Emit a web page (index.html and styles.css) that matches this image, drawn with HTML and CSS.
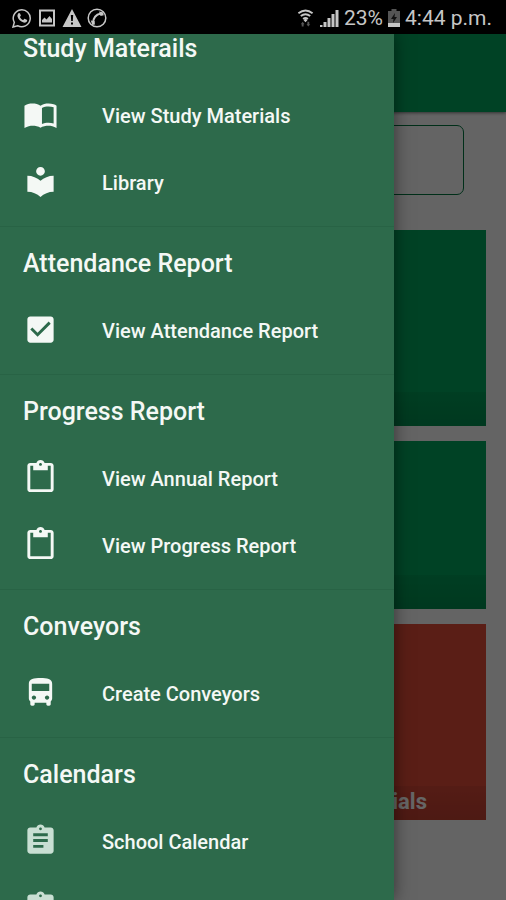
FILE: index.html
```html
<!DOCTYPE html>
<html lang="en">
<head>
<meta charset="utf-8">
<meta name="viewport" content="width=device-width, initial-scale=1">
<title>School menu</title>
<link rel="stylesheet" href="styles.css">
</head>
<body>
<svg class="sprite" aria-hidden="true">
  <symbol id="book" viewBox="0 0 24 24"><path d="M21 5c-1.11-.35-2.33-.5-3.5-.5-1.95 0-4.05.4-5.5 1.5-1.45-1.1-3.55-1.5-5.5-1.500S2.450 4.900 1 6v15.200C3 20.100 5.050 19.700 6.500 19.700c1.950 0 4.050.3 5.500 1.300 1.350-.9 3.800-1.300 5.500-1.300 1.650 0 3.500.4 5.500 1.500V6c-.6-.45-1.250-.75-2-1zm0 13.100c-1.100-.35-2.300-.5-3.500-.5-1.700 0-3.200.3-4.500.9V7.500c1.350-.7 2.800-1 4.500-1 1.200 0 2.400.15 3.500.5v11.100z"/></symbol>
  <symbol id="library" viewBox="0 0 24 24"><path d="M12 11.55C9.64 9.35 6.48 8 3 8v11c3.48 0 6.64 1.35 9 3.55 2.36-2.19 5.52-3.55 9-3.55V8c-3.48 0-6.64 1.35-9 3.55zM12 8c1.66 0 3-1.34 3-3s-1.34-3-3-3-3 1.34-3 3 1.34 3 3 3z"/></symbol>
  <symbol id="check" viewBox="0 0 24 24"><path fill-rule="evenodd" d="M19 3H5c-1.1 0-2 .9-2 2v14c0 1.1.9 2 2 2h14c1.1 0 2-.9 2-2V5c0-1.1-.9-2-2-2zm-9 14-5-5 1.41-1.41L10 14.17l7.59-7.59L19 8l-9 9z"/></symbol>
  <symbol id="paste" viewBox="0 0 24 24"><path d="M19 2h-4.18C14.4.84 13.3 0 12 0c-1.3 0-2.4.84-2.82 2H5c-1.1 0-2 .9-2 2v16c0 1.1.9 2 2 2h14c1.1 0 2-.9 2-2V4c0-1.1-.9-2-2-2zm-7 0c.55 0 1 .45 1 1s-.45 1-1 1-1-.45-1-1 .45-1 1-1zm7 18H5V4h2v3h10V4h2v16z"/></symbol>
  <symbol id="bus" viewBox="0 0 24 24"><path d="M4 16c0 .88.39 1.67 1 2.22V20c0 .55.45 1 1 1h1c.55 0 1-.45 1-1v-1h8v1c0 .55.45 1 1 1h1c.55 0 1-.45 1-1v-1.78c.61-.55 1-1.34 1-2.22V6c0-3.5-3.58-4-8-4s-8 .5-8 4v10zm3.5 1c-.83 0-1.5-.67-1.5-1.5S6.67 14 7.5 14s1.5.67 1.5 1.5S8.33 17 7.5 17zm9 0c-.83 0-1.5-.67-1.5-1.5s.67-1.5 1.5-1.5 1.5.67 1.5 1.5-.67 1.5-1.5 1.5zm1.5-6H6V6h12v5z"/></symbol>
  <symbol id="assignment" viewBox="0 0 24 24"><path d="M19 3h-4.18C14.4 1.84 13.3 1 12 1c-1.3 0-2.4.84-2.82 2H5c-1.1 0-2 .9-2 2v14c0 1.1.9 2 2 2h14c1.1 0 2-.9 2-2V5c0-1.1-.9-2-2-2zm-7 0c.55 0 1 .45 1 1s-.45 1-1 1-1-.45-1-1 .45-1 1-1zm2 14H7v-2h7v2zm3-4H7v-2h10v2zm0-4H7V7h10v2z"/></symbol>
</svg>

<header class="status">
  <div class="status-group notices">
    <svg viewBox="0 0 20 20" class="glyph"><path class="line" d="M1 19l1.300-4.600A8.500 8.500 0 1 1 5.600 17.700z"/><path d="M6.500 5.200c.5-.4 1.200-.3 1.500.3l.8 1.700c.1.300 0 .6-.2.900l-.7.800c.7 1.500 1.900 2.600 3.400 3.200l.9-1c.2-.3.500-.3.800-.2l1.800.9c.5.300.5.800.3 1.300-.6 1.300-2 1.800-3.500 1.400-3-.8-5.500-3.200-6.100-6-.2-1.300.2-2.600 1-3.300z"/></svg>
    <svg viewBox="0 0 20 20" class="glyph"><path class="line thick" d="M3 2.500h14v15H3z"/><path d="M5 14.500V12l2.500-2.500 2 2L12.500 8l2.500 3v3.500z"/></svg>
    <svg viewBox="0 0 20 20" class="glyph"><path fill-rule="evenodd" d="M10 1l9.500 18H.5zM8.800 7l.4 6h1.600l.4-6zm.2 7.500v2h2v-2z"/></svg>
    <svg viewBox="0 0 20 20" class="glyph"><circle class="line" cx="10" cy="10" r="8.800"/><path class="line thick" d="M6 15.500C6 10 9 6.500 14 5.500"/><path d="M3.800 12.500l3.800.5.300 3.500-2.600.5zM12 3.500l3.800.8 1 3-3.300.7z"/></svg>
  </div>
  <div class="status-group">
    <svg viewBox="0 0 18 20" class="wifi"><path class="line thick" d="M1.500 5q7.500-6 15 0M4 8q5-4 10 0M6.500 11q2.500-2 5 0"/><path d="M9 10l2 2.500-2 2-2-2z"/><path class="dim" d="M6 14l2 2.500H7V19H5v-2.500H4zM12 19l-2-2.500h1V14h2v2.500h1z"/></svg>
    <svg viewBox="0 0 20 20" class="glyph"><path d="M1 17h2.500v2H1zM4.500 14h3v5h-3zM8.500 10h3v9h-3zM12.500 6h3v13h-3zM16.500 2h3v17h-3z"/></svg>
    <span>23%</span>
    <svg viewBox="0 0 12 20" class="battery"><path class="dim" d="M3.500 1h5v2H12v16H0V3h3.500z"/><path class="bolt" d="M7 5L3 11h2.500L5 15l4-6H6.500z"/><path d="M0 15h12v4H0z"/></svg>
    <span>4:44 p.m.</span>
  </div>
</header>

<div class="screen">
  <main class="page">
    <div class="toolbar"></div>
    <div class="content">
      <input class="search" type="text" aria-label="Search">
      <div class="cards">
        <section class="card tall"><p class="caption"></p></section>
        <section class="card"><p class="caption"></p></section>
        <section class="card tall red"><p class="caption">Materials</p></section>
      </div>
    </div>
  </main>
  <div class="scrim"></div>
  <nav class="drawer">
    <div class="drawer-list">
      <section class="group">
        <h2>Study Materails</h2>
        <a class="item" href="#"><svg><use href="#book"/></svg>View Study Materials</a>
        <a class="item" href="#"><svg><use href="#library"/></svg>Library</a>
      </section>
      <section class="group">
        <h2>Attendance Report</h2>
        <a class="item" href="#"><svg><use href="#check"/></svg>View Attendance Report</a>
      </section>
      <section class="group">
        <h2>Progress Report</h2>
        <a class="item" href="#"><svg><use href="#paste"/></svg>View Annual Report</a>
        <a class="item" href="#"><svg><use href="#paste"/></svg>View Progress Report</a>
      </section>
      <section class="group">
        <h2>Conveyors</h2>
        <a class="item" href="#"><svg><use href="#bus"/></svg>Create Conveyors</a>
      </section>
      <section class="group">
        <h2>Calendars</h2>
        <a class="item soft" href="#"><svg><use href="#assignment"/></svg>School Calendar</a>
        <a class="item soft" href="#"><svg><use href="#assignment"/></svg>Activity Calendar</a>
      </section>
    </div>
  </nav>
</div>
</body>
</html>
```

FILE: styles.css
```css
* {
  box-sizing: border-box;
}

body {
  margin: 0;
  height: 100vh;
  display: flex;
  flex-direction: column;
  overflow: hidden;
  font-family: Roboto, "Liberation Sans", sans-serif;
}

.sprite {
  display: none;
}

.status {
  flex: none;
  height: 34px;
  padding: 2px 14px 0 12px;
  display: flex;
  align-items: center;
  justify-content: space-between;
  background: #000;
  color: #c6c6c6;
  font-size: 21px;
}

.status-group {
  display: flex;
  align-items: center;
  gap: 5px;
}

.status svg {
  height: 20px;
  fill: #c6c6c6;
}

.glyph {
  width: 20px;
}

.wifi {
  width: 17px;
}

.battery {
  width: 12px;
}

.status .line {
  fill: none;
  stroke: #c6c6c6;
  stroke-width: 1.5;
}

.status .thick {
  stroke-width: 2;
}

.status .dim {
  fill: #555;
}

.status .bolt {
  fill: #111;
}

.screen {
  position: relative;
  flex: 1;
  min-height: 0;
  overflow: hidden;
}

.page {
  height: 100%;
  background: #fafafa;
}

.toolbar {
  height: 78px;
  background: #00a55c;
  box-shadow: 0 1px 3px rgba(0, 0, 0, 0.5);
}

.content {
  padding: 13px 20px;
}

.search {
  display: block;
  width: calc(100% - 44px);
  height: 70px;
  margin: 0 22px 35px;
  border: 1px solid #00753f;
  border-radius: 7px;
  background: transparent;
}

.cards {
  display: grid;
  gap: 15px;
}

.card {
  height: 168px;
  display: flex;
  flex-direction: column;
  justify-content: flex-end;
  background: #00a55c;
}

.tall {
  height: 196px;
}

.red {
  background: #e14b39;
}

.caption {
  height: 34px;
  margin: 0;
  padding-right: 59px;
  background: linear-gradient(rgba(0, 0, 0, 0.06), rgba(0, 0, 0, 0.14));
  color: #fff;
  font-size: 22px;
  font-weight: 700;
  line-height: 32px;
  text-align: right;
}

.scrim {
  position: absolute;
  inset: 0;
  background: rgba(0, 0, 0, 0.6);
}

.drawer {
  position: absolute;
  inset: 0 112px 0 0;
  overflow: hidden;
  background: #2d6a4b;
  box-shadow: 0 0 16px rgba(0, 0, 0, 0.5);
}

/* The list rests slightly scrolled past its first divider. */
.drawer-list {
  margin-top: -23px;
}

.group {
  padding-bottom: 10px;
  border-top: 1px solid #286345;
}

.group h2 {
  margin: 0;
  padding: 4px 23px 0;
  color: #f4f8f5;
  font-size: 25px;
  font-weight: 500;
  line-height: 66px;
}

.item {
  height: 67px;
  padding-left: 23px;
  display: flex;
  align-items: center;
  gap: 44px;
  color: #f4f8f5;
  font-size: 20px;
  font-weight: 500;
  text-decoration: none;
  white-space: nowrap;
}

.item svg {
  flex: none;
  width: 35px;
  height: 35px;
  margin-bottom: 3px;
  fill: #f4f8f5;
}

.soft svg {
  fill: #c9dfd3;
}
```
